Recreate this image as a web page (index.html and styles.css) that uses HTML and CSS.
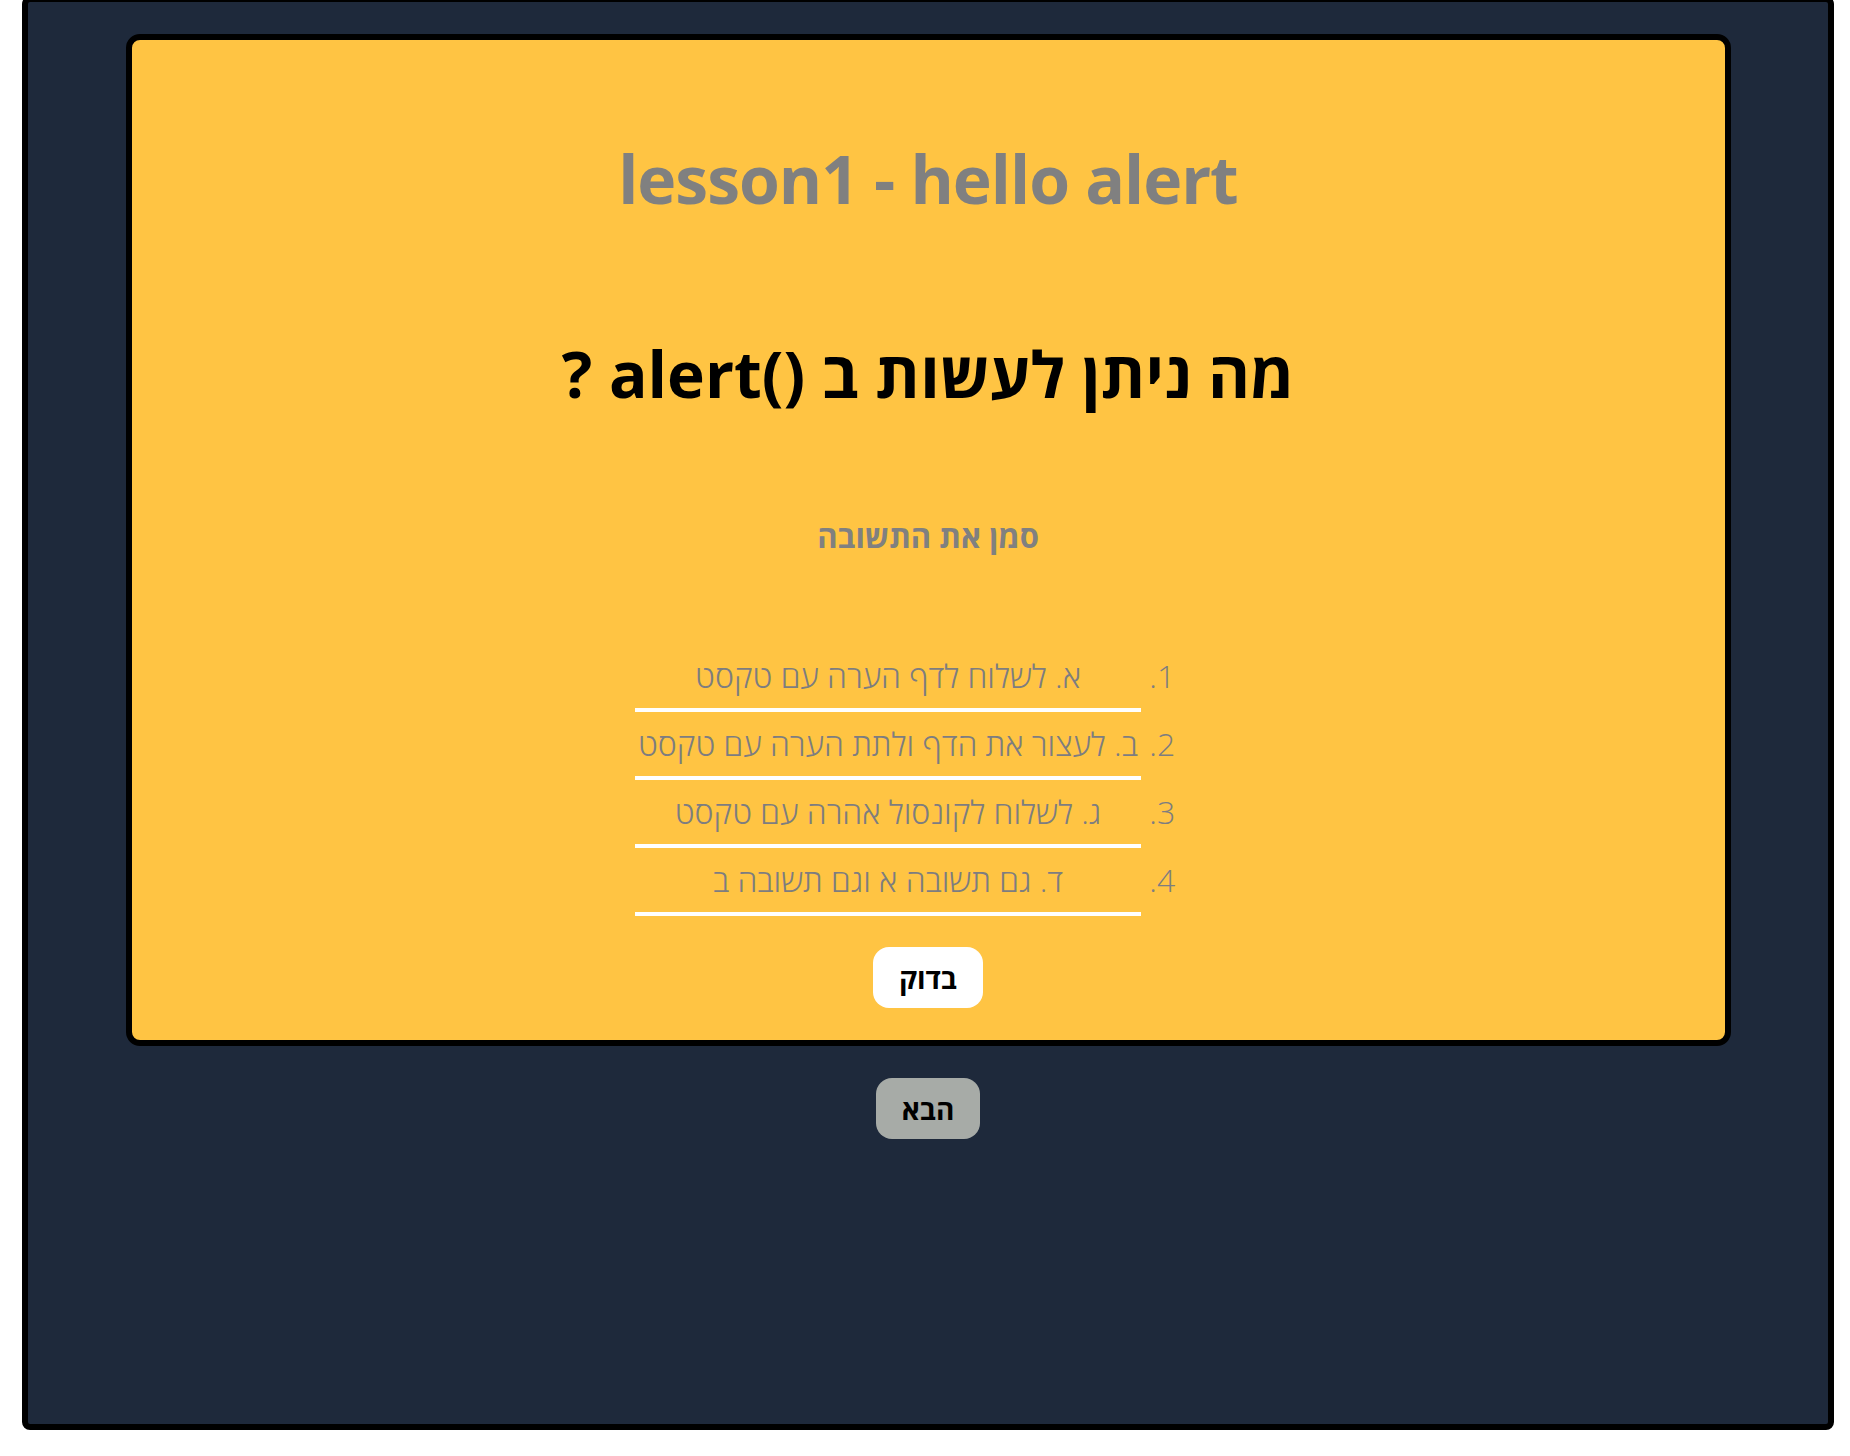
FILE: index.html
```html
<!DOCTYPE html>
<html lang="he">
<head>
<meta charset="utf-8">
<title>lesson1 - hello alert</title>
<link rel="stylesheet" href="styles.css">
</head>
<body>
<div class="frame">
  <main class="card">
    <h1 class="title">lesson1 - hello alert</h1>
    <h2 class="question" dir="rtl">מה ניתן לעשות ב ()alert ?</h2>
    <p class="prompt" dir="rtl">סמן את התשובה</p>
    <ol class="answers" dir="rtl">
      <li>א. לשלוח לדף הערה עם טקסט</li>
      <li>ב. לעצור את הדף ולתת הערה עם טקסט</li>
      <li>ג. לשלוח לקונסול אהרה עם טקסט</li>
      <li>ד. גם תשובה א וגם תשובה ב</li>
    </ol>
    <button class="btn btn-check" type="button">בדוק</button>
  </main>
  <div class="next-row">
    <button class="btn btn-next" type="button">הבא</button>
  </div>
</div>
</body>
</html>
```
FILE: styles.css
```css
html, body {
  margin: 0;
  padding: 0;
  background: #ffffff;
}

body {
  font-family: "Open Sans", "DejaVu Sans", sans-serif;
}

.frame {
  box-sizing: border-box;
  margin: -4px 16px 0 22px;
  height: 1434px;
  border: 6px solid #000;
  border-radius: 8px;
  background: #1e293b;
  padding-top: 32px;
}

.card {
  box-sizing: border-box;
  width: 1605px;
  margin: 0 auto;
  border: 6px solid #000;
  border-radius: 14px;
  background: #ffc443;
  padding: 0 0 32px;
  text-align: center;
}

.title {
  margin: 96px 0 0;
  font-size: 66px;
  line-height: 84px;
  font-weight: 700;
  letter-spacing: -1px;
  color: #808080;
}

.question {
  margin: 114px 0 0;
  font-size: 64px;
  line-height: 80px;
  font-weight: 700;
  color: #000;
}

.prompt {
  margin: 102px 0 0;
  font-size: 31px;
  line-height: 40px;
  font-weight: 700;
  color: #808080;
}

.answers {
  width: 506px;
  margin: 88px auto 0;
  padding: 0;
  padding-inline-start: 80px;
  color: #7d7d80;
  font-size: 32px;
  font-weight: 300;
}

.answers li {
  line-height: 40px;
  padding: 12px 0;
  border-bottom: 4px solid #fff;
  text-align: center;
  white-space: nowrap;
}

.btn {
  font-family: inherit;
  font-size: 28px;
  font-weight: 700;
  color: #000;
  border: none;
  border-radius: 16px;
  height: 61px;
  padding: 0 26px;
}

.btn-check {
  margin-top: 31px;
  background: #fff;
}

.next-row {
  margin-top: 32px;
  text-align: center;
}

.btn-next {
  background: #a7aba7;
}
```
